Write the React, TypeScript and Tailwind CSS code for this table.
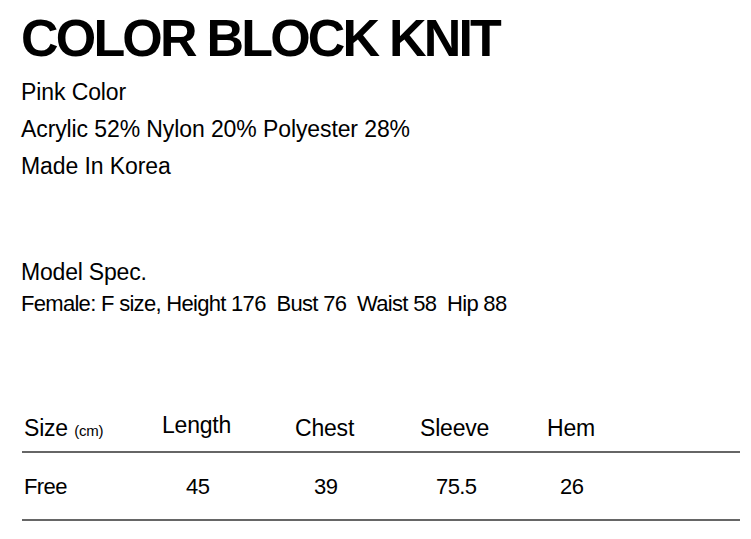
export default function App() {
  return (
    <div className="w-[751px] h-[539px] bg-white text-black overflow-hidden" style={{ fontFamily: '"Liberation Sans", Arial, sans-serif' }}>
      <div className="pl-[21px] pt-[10px]">
        <h1 className="text-[52px] font-bold leading-[56px] tracking-[-2.8px]">COLOR BLOCK KNIT</h1>
        <div className="mt-[8px] flex flex-col text-[23px] leading-[37px] tracking-[-0.1px]">
          <p>Pink Color</p>
          <p>Acrylic 52% Nylon 20% Polyester 28%</p>
          <p>Made In Korea</p>
        </div>
        <div className="mt-[70px] flex flex-col">
          <p className="text-[23px] leading-[34px] tracking-[-0.2px]">Model Spec.</p>
          <p className="text-[22px] leading-[30px] tracking-[-0.7px]">
            Female: F size, Height 176&nbsp; Bust 76&nbsp; Waist 58&nbsp; Hip 88
          </p>
        </div>
      </div>
      <div className="mt-[89px] ml-[22px] w-[718px]">
        <div className="grid grid-cols-[140px_133px_125px_127px_1fr] items-end h-[45px] pb-[10px] border-b-2 border-[#666] text-[23px] tracking-[-0.2px]">
          <span className="pl-[2px]">Size <span className="text-[15px]">(cm)</span></span>
          <span className="mb-[3px]">Length</span>
          <span>Chest</span>
          <span>Sleeve</span>
          <span>Hem</span>
        </div>
        <div className="grid grid-cols-[140px_133px_125px_127px_1fr] items-center h-[68px] border-b-2 border-[#666] text-[22px] tracking-[-0.6px]">
          <span className="pl-[2px]">Free</span>
          <span className="pl-[24px]">45</span>
          <span className="pl-[19px]">39</span>
          <span className="pl-[16px]">75.5</span>
          <span className="pl-[13px]">26</span>
        </div>
      </div>
    </div>
  );
}
